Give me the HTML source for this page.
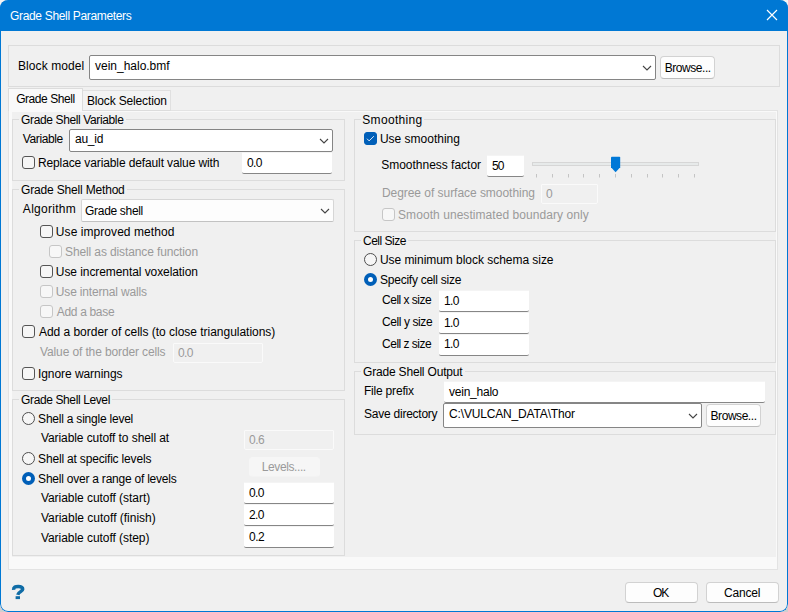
<!DOCTYPE html>
<html><head><meta charset="utf-8"><title>Grade Shell Parameters</title>
<style>
html,body{margin:0;padding:0;background:#f6f4f4;}
body{position:relative;width:788px;height:612px;overflow:hidden;font-family:"Liberation Sans",sans-serif;}
#win{position:relative;width:788px;height:612px;background:#f0f0f0;border-radius:8px;overflow:hidden;}
#win div,#win span,#win svg{position:absolute;box-sizing:border-box;}
.t{font:12px/14px "Liberation Sans",sans-serif;white-space:pre;}
#tb{left:0;top:0;width:788px;height:31px;background:#0078d4;}
#frame{left:0;top:0;width:788px;height:612px;border:1px solid #0078d4;border-top:none;border-radius:8px;z-index:50;}
.gb{border:1px solid #dcdcdc;}
.gt{background:#f0f0f0;height:12px;}
.pane{background:#f9f9f9;border:1px solid #e3e3e3;}
.cb{width:13px;height:13px;border:1px solid #555;border-radius:3px;background:#f6f6f6;}
.cb.d{border-color:#c6c6c6;background:#f7f7f7;}
.cb.on{border-color:#005fb8;background:#005fb8;}
.rb{width:13px;height:13px;border:1px solid #4e4e4e;border-radius:50%;background:#f6f6f6;}
.rb.on{border:4px solid #005fb8;background:#fff;}
.in{background:#fff;border-top:1px solid #f4f4f4;border-bottom:1px solid #868686;border-radius:1px 1px 2px 2px;}
.in.d{background:#f0f0f0;border:1px solid #fafafa;}
.co{background:#fff;border:1px solid #858585;border-radius:2px;}
.co.l{background:#fdfdfd;border:1px solid #d6d6d6;border-bottom-color:#c2c2c2;}
.bt{background:#fdfdfd;border:1px solid #d2d2d2;border-bottom-color:#bcbcbc;border-radius:4px;}
.bt.d{background:#f6f6f6;border-color:#f6f6f6 #f6f6f6 #f3f3f3 #f6f6f6;}
.corner{position:absolute;width:9px;height:9px;background:#cfcfcf;top:603px;}

</style></head><body>
<div class="corner" style="left:0"></div><div class="corner" style="left:779px"></div>
<div id="win">
<div id="tb"></div>
<svg style="left:766px;top:9px" width="12" height="12" viewBox="0 0 12 12"><path d="M1 1 L11 11 M11 1 L1 11" stroke="#fff" stroke-width="1.15" fill="none"/></svg>
<div id="frame"></div>

<!-- block model panel -->
<div class="gb" style="left:8px;top:45px;width:772px;height:42px"></div>
<div class="co" style="left:89px;top:55px;width:567px;height:25px"></div>
<svg class="chev" style="left:642px;top:65px" width="10" height="7" viewBox="0 0 10 7"><path d="M1 1 L5 5 L9 1" stroke="#444" stroke-width="1.1" fill="none"/></svg>
<div class="bt" style="left:660px;top:56px;width:55px;height:23px"></div>

<!-- tabs -->
<div class="pane" style="left:8px;top:110px;width:770px;height:460px"></div>
<div style="left:83px;top:90px;width:88px;height:21px;background:#f3f3f3;border:1px solid #e0e0e0;border-left:none;border-bottom-color:#dcdcdc"></div>
<div style="left:8px;top:88px;width:75px;height:23px;background:#f9f9f9;border:1px solid #dcdcdc;border-bottom:none"></div>
<div style="left:12px;top:112px;width:764px;height:445px;background:#f0f0f0"></div>

<!-- group boxes -->
<div class="gb" style="left:12px;top:119px;width:333px;height:62px"></div>
<div class="gt" style="left:19px;top:113px;width:107px"></div>
<div class="gb" style="left:12px;top:189px;width:333px;height:202px"></div>
<div class="gt" style="left:19px;top:183px;width:108px"></div>
<div class="gb" style="left:12px;top:399px;width:333px;height:157px"></div>
<div class="gt" style="left:19px;top:393px;width:93px"></div>
<div class="gb" style="left:354px;top:119px;width:422px;height:113px"></div>
<div class="gt" style="left:361px;top:113px;width:63px"></div>
<div class="gb" style="left:354px;top:240px;width:422px;height:123px"></div>
<div class="gt" style="left:361px;top:234px;width:47px"></div>
<div class="gb" style="left:354px;top:371px;width:422px;height:64px"></div>
<div class="gt" style="left:361px;top:365px;width:104px"></div>

<!-- G1 -->
<div class="co" style="left:69px;top:129px;width:264px;height:23px"></div>
<svg style="left:319px;top:138px" width="10" height="7" viewBox="0 0 10 7"><path d="M1 1 L5 5 L9 1" stroke="#444" stroke-width="1.1" fill="none"/></svg>
<div class="cb" style="left:22px;top:156px"></div>
<div class="in" style="left:242px;top:152px;width:90px;height:22px"></div>

<!-- G2 -->
<div class="co l" style="left:81px;top:199px;width:253px;height:23px"></div>
<svg style="left:320px;top:208px" width="10" height="7" viewBox="0 0 10 7"><path d="M1 1 L5 5 L9 1" stroke="#444" stroke-width="1.1" fill="none"/></svg>
<div class="cb" style="left:40px;top:225px"></div>
<div class="cb d" style="left:49px;top:245px"></div>
<div class="cb" style="left:40px;top:265px"></div>
<div class="cb d" style="left:40px;top:285px"></div>
<div class="cb d" style="left:40px;top:305px"></div>
<div class="cb" style="left:22px;top:325px"></div>
<div class="in d" style="left:173px;top:343px;width:90px;height:20px"></div>
<div class="cb" style="left:22px;top:367px"></div>

<!-- G3 -->
<div class="rb" style="left:22px;top:412px"></div>
<div class="in d" style="left:244px;top:430px;width:90px;height:20px"></div>
<div class="rb" style="left:22px;top:452px"></div>
<div class="bt d" style="left:249px;top:457px;width:71px;height:20px"></div>
<div class="rb on" style="left:22px;top:472px"></div>
<div class="in" style="left:244px;top:482px;width:90px;height:22px"></div>
<div class="in" style="left:244px;top:504px;width:90px;height:22px"></div>
<div class="in" style="left:244px;top:526px;width:90px;height:22px"></div>

<!-- G4 smoothing -->
<div class="cb on" style="left:364px;top:132px"></div>
<svg style="left:364px;top:132px" width="13" height="13" viewBox="0 0 13 13"><path d="M3 6.7 L5.1 8.9 L9.9 4.2" stroke="#e6effa" stroke-width="0.95" fill="none"/></svg>
<div class="in" style="left:487px;top:155px;width:37px;height:22px"></div>
<div style="left:532px;top:162px;width:167px;height:4px;background:#e7eaea;border:1px solid #d6d6d6"></div>
<svg style="left:610px;top:156px" width="12" height="18" viewBox="0 0 12 18"><path d="M1 1.6 Q1 0.8 1.8 0.8 H9.4 Q10.2 0.8 10.2 1.6 V11.2 L5.6 16.2 L1 11.2 Z" fill="#0078d7"/></svg>
<svg style="left:530px;top:173px" width="172" height="6" viewBox="0 0 172 6"><path d="M6.5 1V4.5M22.5 1V4.5M38.5 1V4.5M53.5 1V4.5M69.5 1V4.5M85.5 1V4.5M101.5 1V4.5M117.5 1V4.5M132.5 1V4.5M148.5 1V4.5M164.5 1V4.5" stroke="#c4c4c4" stroke-width="1" fill="none"/></svg>
<div class="in d" style="left:541px;top:184px;width:57px;height:20px"></div>
<div class="cb d" style="left:382px;top:208px"></div>

<!-- G5 cell size -->
<div class="rb" style="left:364px;top:253px"></div>
<div class="rb on" style="left:364px;top:273px"></div>
<div class="in" style="left:439px;top:290px;width:90px;height:22px"></div>
<div class="in" style="left:439px;top:312px;width:90px;height:22px"></div>
<div class="in" style="left:439px;top:334px;width:90px;height:22px"></div>

<!-- G6 output -->
<div class="in" style="left:444px;top:381px;width:321px;height:22px"></div>
<div class="co" style="left:443px;top:403px;width:259px;height:25px"></div>
<svg style="left:688px;top:413px" width="10" height="7" viewBox="0 0 10 7"><path d="M1 1 L5 5 L9 1" stroke="#444" stroke-width="1.1" fill="none"/></svg>
<div class="bt" style="left:706px;top:404px;width:55px;height:23px"></div>

<!-- bottom -->
<div class="bt" style="left:625px;top:582px;width:73px;height:21px"></div>
<div class="bt" style="left:706px;top:582px;width:73px;height:21px"></div>
<svg id="help" style="left:10px;top:583px" width="18" height="18" viewBox="0 0 18 18"><path d="M3.6 6.9 C3.5 3.9 5.6 3.4 8.2 3.4 C11.2 3.4 12.7 4.5 12.7 6.2 C12.7 8.5 8.4 8.7 7.8 11.8" stroke="#0f6ca6" stroke-width="3.5" fill="none"/><rect x="5.6" y="13.2" width="4.4" height="2.9" fill="#0f6ca6"/></svg>

<span class="t" id="t_title" style="left:10.04px;top:8.84px;letter-spacing:-0.335px;color:#fff;">Grade Shell Parameters</span>
<span class="t" id="t_bm" style="left:17.90px;top:58.84px;letter-spacing:0.098px;color:#000;">Block model</span>
<span class="t" id="t_bmv" style="left:95.04px;top:58.84px;letter-spacing:-0.012px;color:#000;">vein_halo.bmf</span>
<span class="t" id="t_br1" style="left:664.78px;top:61.04px;letter-spacing:-0.453px;color:#000;">Browse...</span>
<span class="t" id="t_tab1" style="left:16.14px;top:92.04px;letter-spacing:-0.424px;color:#000;">Grade Shell</span>
<span class="t" id="t_tab2" style="left:86.92px;top:93.54px;letter-spacing:-0.149px;color:#000;">Block Selection</span>
<span class="t" id="t_g1" style="left:21.12px;top:113.04px;letter-spacing:-0.376px;color:#000;">Grade Shell Variable</span>
<span class="t" id="t_var" style="left:22.86px;top:131.84px;letter-spacing:-0.417px;color:#000;">Variable</span>
<span class="t" id="t_auid" style="left:75.08px;top:132.44px;letter-spacing:-0.280px;color:#000;">au_id</span>
<span class="t" id="t_repl" style="left:37.92px;top:156.04px;letter-spacing:-0.115px;color:#000;">Replace variable default value with</span>
<span class="t" id="t_v00" style="left:247.00px;top:155.64px;letter-spacing:-0.600px;color:#000;">0.0</span>
<span class="t" id="t_g2" style="left:21.12px;top:183.04px;letter-spacing:-0.179px;color:#000;">Grade Shell Method</span>
<span class="t" id="t_alg" style="left:22.86px;top:202.04px;letter-spacing:0.278px;color:#000;">Algorithm</span>
<span class="t" id="t_algv" style="left:85.10px;top:203.84px;letter-spacing:-0.318px;color:#000;">Grade shell</span>
<span class="t" id="t_c1" style="left:55.86px;top:225.04px;letter-spacing:0.059px;color:#000;">Use improved method</span>
<span class="t" id="t_c2" style="left:65.10px;top:245.04px;letter-spacing:-0.124px;color:#9a9a9a;">Shell as distance function</span>
<span class="t" id="t_c3" style="left:55.86px;top:265.04px;letter-spacing:-0.078px;color:#000;">Use incremental voxelation</span>
<span class="t" id="t_c4" style="left:55.86px;top:285.04px;letter-spacing:-0.172px;color:#9a9a9a;">Use internal walls</span>
<span class="t" id="t_c5" style="left:56.86px;top:305.04px;letter-spacing:-0.336px;color:#9a9a9a;">Add a base</span>
<span class="t" id="t_c6" style="left:38.92px;top:325.04px;letter-spacing:-0.023px;color:#000;">Add a border of cells (to close triangulations)</span>
<span class="t" id="t_vb" style="left:40.02px;top:345.44px;letter-spacing:-0.122px;color:#9a9a9a;">Value of the border cells</span>
<span class="t" id="t_vbv" style="left:178.04px;top:346.04px;letter-spacing:-0.630px;color:#9a9a9a;">0.0</span>
<span class="t" id="t_c7" style="left:37.92px;top:367.04px;letter-spacing:-0.054px;color:#000;">Ignore warnings</span>
<span class="t" id="t_g3" style="left:21.12px;top:393.14px;letter-spacing:-0.388px;color:#000;">Grade Shell Level</span>
<span class="t" id="t_r1" style="left:38.12px;top:412.04px;letter-spacing:-0.222px;color:#000;">Shell a single level</span>
<span class="t" id="t_vc1" style="left:40.92px;top:430.94px;letter-spacing:-0.078px;color:#000;">Variable cutoff to shell at</span>
<span class="t" id="t_v06" style="left:249.00px;top:432.74px;letter-spacing:-0.480px;color:#9a9a9a;">0.6</span>
<span class="t" id="t_r2" style="left:38.12px;top:452.04px;letter-spacing:-0.179px;color:#000;">Shell at specific levels</span>
<span class="t" id="t_lev" style="left:261.84px;top:460.04px;letter-spacing:-0.409px;color:#9a9a9a;">Levels....</span>
<span class="t" id="t_r3" style="left:38.12px;top:472.04px;letter-spacing:-0.227px;color:#000;">Shell over a range of levels</span>
<span class="t" id="t_vs" style="left:40.92px;top:491.04px;letter-spacing:-0.045px;color:#000;">Variable cutoff (start)</span>
<span class="t" id="t_vf" style="left:40.92px;top:510.94px;letter-spacing:-0.003px;color:#000;">Variable cutoff (finish)</span>
<span class="t" id="t_vp" style="left:40.92px;top:530.74px;letter-spacing:-0.049px;color:#000;">Variable cutoff (step)</span>
<span class="t" id="t_i1" style="left:249.00px;top:485.64px;letter-spacing:-0.580px;color:#000;">0.0</span>
<span class="t" id="t_i2" style="left:249.00px;top:507.74px;letter-spacing:-0.580px;color:#000;">2.0</span>
<span class="t" id="t_i3" style="left:249.00px;top:529.84px;letter-spacing:-0.480px;color:#000;">0.2</span>
<span class="t" id="t_g4" style="left:362.24px;top:113.24px;letter-spacing:0.335px;color:#000;">Smoothing</span>
<span class="t" id="t_us" style="left:379.90px;top:132.04px;letter-spacing:0.002px;color:#000;">Use smoothing</span>
<span class="t" id="t_sf" style="left:381.24px;top:157.94px;letter-spacing:-0.015px;color:#000;">Smoothness factor</span>
<span class="t" id="t_v50" style="left:492.12px;top:158.64px;letter-spacing:-1.120px;color:#000;">50</span>
<span class="t" id="t_dg" style="left:381.88px;top:186.04px;letter-spacing:-0.038px;color:#9a9a9a;">Degree of surface smoothing</span>
<span class="t" id="t_v0" style="left:546.04px;top:186.64px;letter-spacing:0.000px;color:#9a9a9a;">0</span>
<span class="t" id="t_sm" style="left:398.06px;top:208.04px;letter-spacing:0.061px;color:#9a9a9a;">Smooth unestimated boundary only</span>
<span class="t" id="t_g5" style="left:363.04px;top:233.94px;letter-spacing:-0.510px;color:#000;">Cell Size</span>
<span class="t" id="t_cr1" style="left:379.90px;top:253.04px;letter-spacing:-0.038px;color:#000;">Use minimum block schema size</span>
<span class="t" id="t_cr2" style="left:380.10px;top:273.04px;letter-spacing:-0.258px;color:#000;">Specify cell size</span>
<span class="t" id="t_cx" style="left:382.10px;top:292.84px;letter-spacing:-0.516px;color:#000;">Cell x size</span>
<span class="t" id="t_cy" style="left:382.10px;top:315.04px;letter-spacing:-0.416px;color:#000;">Cell y size</span>
<span class="t" id="t_cz" style="left:382.10px;top:336.94px;letter-spacing:-0.516px;color:#000;">Cell z size</span>
<span class="t" id="t_cxv" style="left:443.88px;top:293.54px;letter-spacing:-0.530px;color:#000;">1.0</span>
<span class="t" id="t_cyv" style="left:443.88px;top:315.54px;letter-spacing:-0.530px;color:#000;">1.0</span>
<span class="t" id="t_czv" style="left:443.88px;top:337.44px;letter-spacing:-0.530px;color:#000;">1.0</span>
<span class="t" id="t_g6" style="left:363.04px;top:365.34px;letter-spacing:-0.186px;color:#000;">Grade Shell Output</span>
<span class="t" id="t_fp" style="left:363.90px;top:383.94px;letter-spacing:-0.190px;color:#000;">File prefix</span>
<span class="t" id="t_fpv" style="left:449.00px;top:384.64px;letter-spacing:-0.237px;color:#000;">vein_halo</span>
<span class="t" id="t_sd" style="left:364.10px;top:406.74px;letter-spacing:-0.245px;color:#000;">Save directory</span>
<span class="t" id="t_sdv" style="left:449.10px;top:406.74px;letter-spacing:-0.168px;color:#000;">C:\VULCAN_DATA\Thor</span>
<span class="t" id="t_br2" style="left:710.56px;top:409.04px;letter-spacing:-0.448px;color:#000;">Browse...</span>
<span class="t" id="t_ok" style="left:653.10px;top:585.94px;letter-spacing:-1.060px;color:#000;">OK</span>
<span class="t" id="t_cancel" style="left:724.10px;top:585.94px;letter-spacing:-0.220px;color:#000;">Cancel</span>
</div>
</body></html>
